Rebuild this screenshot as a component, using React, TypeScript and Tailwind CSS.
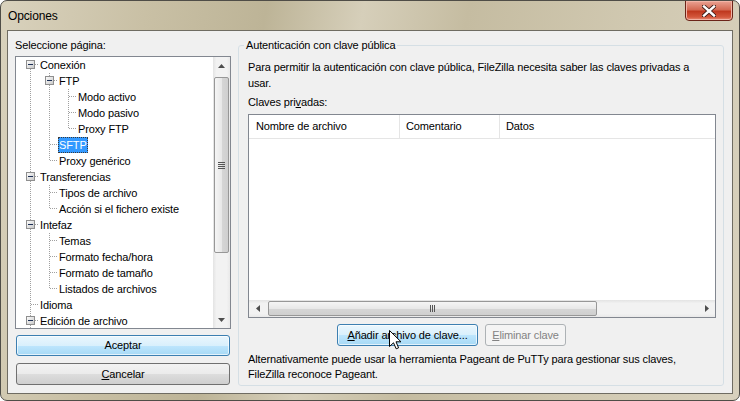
import type { ReactNode } from 'react';

type Row = {
  label: string;
  level: number;
  guides: boolean[];
  expander?: boolean;
  first?: boolean;
  last?: boolean;
  selected?: boolean;
};

const rows: Row[] = [
  { label: 'Conexión', level: 0, guides: [], expander: true, first: true },
  { label: 'FTP', level: 1, guides: [true], expander: true },
  { label: 'Modo activo', level: 2, guides: [true, true] },
  { label: 'Modo pasivo', level: 2, guides: [true, true] },
  { label: 'Proxy FTP', level: 2, guides: [true, true], last: true },
  { label: 'SFTP', level: 1, guides: [true], selected: true },
  { label: 'Proxy genérico', level: 1, guides: [true], last: true },
  { label: 'Transferencias', level: 0, guides: [], expander: true },
  { label: 'Tipos de archivo', level: 1, guides: [true] },
  { label: 'Acción si el fichero existe', level: 1, guides: [true], last: true },
  { label: 'Intefaz', level: 0, guides: [], expander: true },
  { label: 'Temas', level: 1, guides: [true] },
  { label: 'Formato fecha/hora', level: 1, guides: [true] },
  { label: 'Formato de tamaño', level: 1, guides: [true] },
  { label: 'Listados de archivos', level: 1, guides: [true], last: true },
  { label: 'Idioma', level: 0, guides: [] },
  { label: 'Edición de archivo', level: 0, guides: [], expander: true },
];

const dot = { stroke: '#a0a0a0', strokeDasharray: '1 1' };

function Guide({ on }: { on: boolean }) {
  return (
    <svg width="19" height="16" className="shrink-0">
      {on && <line x1="9.5" y1="0" x2="9.5" y2="16" {...dot} />}
    </svg>
  );
}

function Connector({ row }: { row: Row }) {
  return (
    <svg width="18" height="16" className="shrink-0">
      {!row.first && <line x1="9.5" y1="0" x2="9.5" y2="8" {...dot} />}
      {!row.last && <line x1="9.5" y1="8" x2="9.5" y2="16" {...dot} />}
      <line x1="10" y1="7.5" x2="18" y2="7.5" {...dot} />
      {row.expander && (
        <g>
          <defs>
            <linearGradient id="exp" x1="0" y1="0" x2="1" y2="1">
              <stop offset="0" stopColor="#ffffff" />
              <stop offset="1" stopColor="#c6c6c6" />
            </linearGradient>
          </defs>
          <rect x="5.5" y="3.5" width="8" height="8" fill="url(#exp)" stroke="#8f8f8f" />
          <line x1="7" y1="7.5" x2="12" y2="7.5" stroke="#1c2f55" />
        </g>
      )}
    </svg>
  );
}

function TreeRow({ row }: { row: Row }) {
  return (
    <div className="flex h-[16px] items-center">
      {row.guides.map((g, i) => (
        <Guide key={i} on={g} />
      ))}
      <Connector row={row} />
      <span
        className={
          row.selected
            ? 'h-[16px] whitespace-nowrap border border-dotted border-[#3a3a3a] bg-[#3399ff] px-[0px] leading-[14px] text-white'
            : 'h-[16px] whitespace-nowrap px-[1px] leading-[16px]'
        }
      >
        {row.label}
      </span>
    </div>
  );
}

function Arrow({ dir }: { dir: 'up' | 'down' | 'left' | 'right' }) {
  const pts = {
    up: '0,4 7,4 3.5,0',
    down: '0,0 7,0 3.5,4',
    left: '4,0 4,7 0,3.5',
    right: '0,0 0,7 4,3.5',
  }[dir];
  const w = dir === 'up' || dir === 'down' ? 7 : 4;
  const h = dir === 'up' || dir === 'down' ? 4 : 7;
  return (
    <svg width={w} height={h}>
      <polygon points={pts} fill="#4d4d4d" />
    </svg>
  );
}

function WinButton({
  children,
  variant = 'normal',
  className = '',
}: {
  children: ReactNode;
  variant?: 'normal' | 'focus' | 'disabled';
  className?: string;
}) {
  const styles = {
    normal:
      'border-[#707070] bg-[linear-gradient(#f2f2f2_0%,#ebebeb_50%,#dddddd_50%,#cfcfcf_100%)] text-black',
    focus:
      'border-[#3c7fb1] bg-[linear-gradient(#eaf6fd_0%,#d9f0fc_50%,#bee6fd_50%,#a7d9f5_100%)] text-black shadow-[inset_0_0_0_1px_#ffffffaa]',
    disabled: 'border-[#adb2b5] bg-[#f4f4f4] text-[#838383]',
  }[variant];
  return (
    <div
      className={`relative flex items-center justify-center rounded-[3px] border ${styles} ${className}`}
    >
      {children}
    </div>
  );
}

export default function App() {
  return (
    <div className="flex h-[401px] w-[740px] flex-col overflow-hidden rounded-[7px] border border-[#4f4d47] bg-[linear-gradient(100deg,#d9d2bd_0%,#c9c0a5_18%,#bdb497_33%,#d6cfba_45%,#c5bca1_58%,#d0c8b0_78%,#d8d1bd_100%)] font-['Liberation_Sans',sans-serif] text-[11px] tracking-[-0.13px] text-black">
      {/* Title bar */}
      <div className="flex h-[29px] shrink-0 items-start justify-between">
        <span className="mt-[7px] pl-[7px] text-[12px] leading-[16px]">Opciones</span>
        <div className="mr-[6px] mt-[-1px] flex h-[21px] w-[48px] items-center justify-center rounded-b-[4px] border border-[#6b2418] bg-[linear-gradient(#eaa394_0%,#d46a54_45%,#c0391f_55%,#d4583d_85%,#e9927c_100%)] shadow-[inset_0_0_0_1px_#f2b4a6]">
          <svg width="14" height="12" viewBox="0 0 14 12">
            <path d="M2 1.5 L12 10.5 M12 1.5 L2 10.5" stroke="#3d1d18" strokeWidth="4.2" strokeLinecap="square" />
            <path d="M2 1.5 L12 10.5 M12 1.5 L2 10.5" stroke="#ffffff" strokeWidth="2.4" strokeLinecap="square" />
          </svg>
        </div>
      </div>

      {/* Client area */}
      <div className="mx-[6px] mb-[6px] flex flex-1 border border-[#6f6c62] bg-[#f0f0f0] pl-[7px] pr-[8px] pt-[6px]">
        {/* Left column */}
        <div className="flex w-[216px] shrink-0 flex-col">
          <div className="h-[16px] leading-[16px]">Seleccione página:</div>
          <div className="mt-[3px] flex h-[273px] border border-[#828790] bg-white">
            <div className="flex-1 overflow-hidden pl-[5px]">
              {rows.map((r) => (
                <TreeRow key={r.label} row={r} />
              ))}
            </div>
            <div className="flex w-[17px] flex-col bg-[linear-gradient(90deg,#e3e3e3,#f2f2f2_20%,#f2f2f2_80%,#e9e9e9)]">
              <div className="flex h-[17px] items-center justify-center">
                <Arrow dir="up" />
              </div>
              <div className="mx-[1px] mt-[3px] flex h-[176px] items-center justify-center rounded-[2px] border border-[#979797] bg-[linear-gradient(90deg,#f5f5f5,#e8e8e8_50%,#d6d6d6_51%,#cfcfcf)]">
                <div className="flex flex-col gap-[1px]">
                  <div className="h-[1px] w-[7px] bg-[#555]" />
                  <div className="h-[1px] w-[7px] bg-[#555]" />
                  <div className="h-[1px] w-[7px] bg-[#555]" />
                  <div className="h-[1px] w-[7px] bg-[#555]" />
                </div>
              </div>
              <div className="flex-1" />
              <div className="flex h-[17px] items-center justify-center">
                <Arrow dir="down" />
              </div>
            </div>
          </div>
          <WinButton variant="focus" className="mx-[1px] mt-[6px] h-[21px]">
            Aceptar
          </WinButton>
          <WinButton className="mx-[1px] mt-[7px] h-[22px]">
            <span>
              <span className="underline">C</span>ancelar
            </span>
          </WinButton>
        </div>

        {/* Right group box */}
        <fieldset className="ml-[7px] mb-[7px] w-[486px] rounded-[3px] border border-[#d5dfe5] pb-[3px] pl-[9px] pr-[7px]">
          <legend className="ml-[-4px] px-[2px] leading-[16px]">Autenticación con clave pública</legend>
          <p className="mt-[6px] leading-[16px]">
            Para permitir la autenticación con clave pública, FileZilla necesita saber las claves privadas a
            <br />
            usar.
          </p>
          <div className="mt-[3px] leading-[16px]">
            Claves pri<span className="underline">v</span>adas:
          </div>
          <div className="mt-[4px] flex h-[204px] w-[468px] flex-col border border-[#828790] bg-white">
            <div className="flex h-[24px] border-b border-[#e5e5e5]">
              <div className="flex w-[151px] items-center border-r border-[#e5e5e5] pl-[7px]">Nombre de archivo</div>
              <div className="flex w-[100px] items-center border-r border-[#e5e5e5] pl-[6px]">Comentario</div>
              <div className="flex flex-1 items-center pl-[6px]">Datos</div>
            </div>
            <div className="flex-1" />
            <div className="flex h-[17px] bg-[linear-gradient(#e3e3e3,#f2f2f2_20%,#f2f2f2_80%,#e9e9e9)]">
              <div className="flex w-[17px] items-center justify-center">
                <Arrow dir="left" />
              </div>
              <div className="my-[1px] ml-[2px] flex w-[329px] items-center justify-center rounded-[2px] border border-[#979797] bg-[linear-gradient(#f5f5f5,#e8e8e8_50%,#d6d6d6_51%,#cfcfcf)]">
                <div className="flex gap-[1px]">
                  <div className="h-[7px] w-[1px] bg-[#555]" />
                  <div className="h-[7px] w-[1px] bg-[#555]" />
                  <div className="h-[7px] w-[1px] bg-[#555]" />
                </div>
              </div>
              <div className="flex-1" />
              <div className="flex w-[17px] items-center justify-center">
                <Arrow dir="right" />
              </div>
            </div>
          </div>
          <div className="mt-[6px] flex gap-[7px] pl-[89px]">
            <WinButton variant="focus" className="h-[22px] w-[141px]">
              <span>
                <span className="underline">A</span>ñadir archivo de clave...
              </span>
              <svg width="13" height="20" viewBox="0 0 13 20" className="absolute left-[51px] top-[5px]">
                <path
                  d="M0.5 0.5 L0.5 16.5 L4.5 12.8 L7.2 18.8 L9.6 17.8 L7 11.8 L12 11.8 Z"
                  fill="#ffffff"
                  stroke="#000000"
                  strokeLinejoin="round"
                />
              </svg>
            </WinButton>
            <WinButton variant="disabled" className="h-[22px] w-[81px]">
              <span>
                <span className="underline">E</span>liminar clave
              </span>
            </WinButton>
          </div>
          <p className="mt-[6px] leading-[15px]">
            Alternativamente puede usar la herramienta Pageant de PuTTy para gestionar sus claves,
            <br />
            FileZilla reconoce Pageant.
          </p>
        </fieldset>
      </div>
    </div>
  );
}
